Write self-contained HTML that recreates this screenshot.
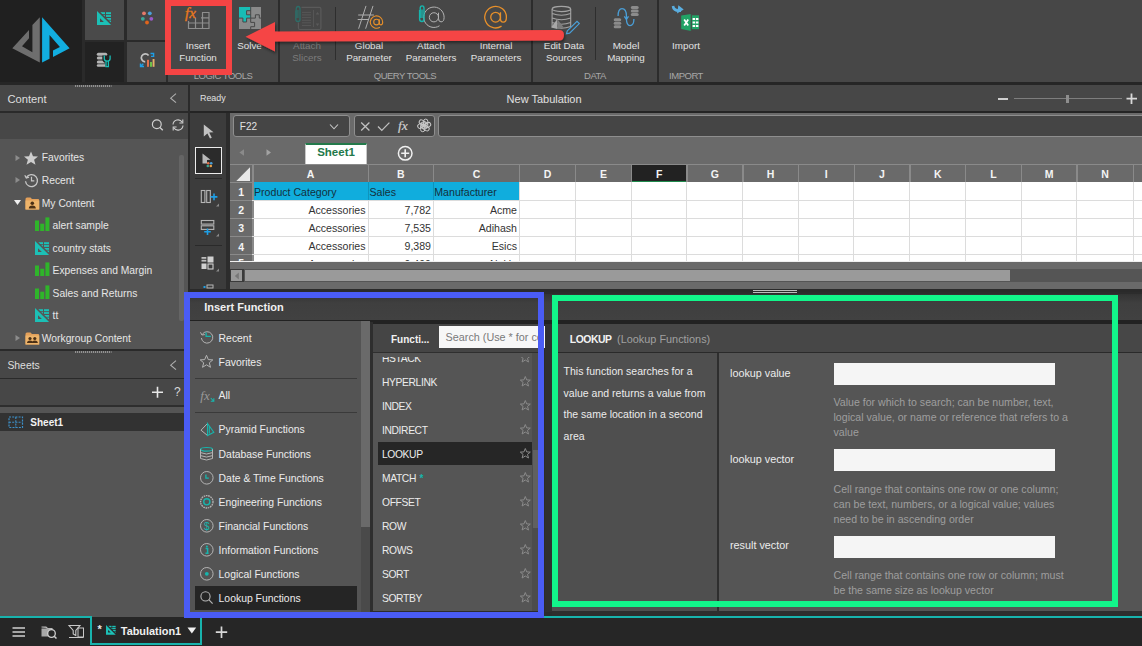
<!DOCTYPE html>
<html><head><meta charset="utf-8">
<style>
*{box-sizing:border-box;margin:0;padding:0}
html,body{width:1142px;height:646px;overflow:hidden}
body{position:relative;background:#555;font-family:"Liberation Sans",sans-serif;color:#e6e6e6}
.a{position:absolute}
.t{position:absolute;white-space:nowrap;line-height:1}
svg{position:absolute;overflow:visible}
</style></head><body>
<div class="a" style="left:0px;top:0px;width:1142px;height:82px;background:#474747;"></div>
<div class="a" style="left:0px;top:0px;width:82px;height:82px;background:#202020;"></div>
<div class="a" style="left:82px;top:0px;width:86px;height:82px;background:#2a2a2a;"></div>
<div class="a" style="left:85px;top:0px;width:39px;height:40px;background:#4a4a4a;"></div>
<div class="a" style="left:127px;top:0px;width:39px;height:40px;background:#474747;"></div>
<div class="a" style="left:85px;top:42px;width:39px;height:40px;background:#222222;"></div>
<div class="a" style="left:127px;top:42px;width:39px;height:40px;background:#474747;"></div>
<div class="a" style="left:0px;top:82px;width:1142px;height:3px;background:#262626;"></div>
<div class="a" style="left:166px;top:0px;width:2px;height:82px;background:#2c2c2c;"></div>
<div class="a" style="left:278px;top:0px;width:2px;height:82px;background:#2c2c2c;"></div>
<div class="a" style="left:531px;top:0px;width:2px;height:82px;background:#2c2c2c;"></div>
<div class="a" style="left:657px;top:0px;width:2px;height:82px;background:#2c2c2c;"></div>
<div class="a" style="left:335px;top:7px;width:1px;height:53px;background:#2e2e2e;"></div>
<div class="a" style="left:595px;top:7px;width:1px;height:53px;background:#2e2e2e;"></div>
<svg style="left:0px;top:0px;" width="82" height="82" viewBox="0 0 82 82"><polygon fill="#6e6e6e" points="39.8,17.3 39.8,62.6 12.3,48.3 29,30.1 29,38.2 22,46.3 32.4,52.2 32.4,25.1"/><polygon fill="#12aee0" points="42.1,17.3 69.6,48.3 53,57 53,50.6 59.9,47.1 49.5,35.1 49.5,58.7 42.1,62.6"/></svg>
<svg style="left:97px;top:11px;" width="15" height="15" viewBox="0 0 15 15"><g transform="scale(1.0)"><path fill="#1cc0b6" fill-rule="evenodd" d="M0,0 L14.1,14 L0,14 Z M3,7.3 L3,11 L6.9,11 Z"/>
<clipPath id="cp97_11"><path d="M2.2,0 H15 V12.8 Z"/></clipPath>
<g clip-path="url(#cp97_11)" fill="#1cc0b6"><rect x="3.2" y="1.2" width="4.8" height="2"/><rect x="9" y="1.2" width="5" height="2"/>
<rect x="3.2" y="4.1" width="4.8" height="1.8"/><rect x="9" y="4.1" width="5" height="1.8"/>
<rect x="3.2" y="7" width="4.8" height="1.8"/><rect x="9" y="7" width="5" height="1.8"/>
<rect x="9" y="9.6" width="5" height="1.6"/></g></g></svg>
<svg style="left:138px;top:8px;" width="16" height="18" viewBox="0 0 16 18"><circle cx="6" cy="5.3" r="1.9" fill="#e57a6a"/><circle cx="11.8" cy="5.3" r="1.9" fill="#4a9fd8"/><circle cx="4.8" cy="10.8" r="1.9" fill="#3aa898"/><circle cx="13.3" cy="10.8" r="1.9" fill="#9b59c9"/><circle cx="9" cy="14.5" r="1.9" fill="#e0651c"/></svg>
<svg style="left:96px;top:52px;" width="16" height="16" viewBox="0 0 16 16"><g fill="#b4b4b4"><rect x="0.8" y="0.8" width="10.4" height="3" rx="1.5"/><rect x="0.8" y="4.6" width="9" height="3" rx="1.5"/><rect x="0.8" y="8.4" width="9" height="3" rx="1.5"/><rect x="0.8" y="12.2" width="10.4" height="2.6" rx="1.3"/></g><path d="M8.3,3.6 V6.8 Q8.3,9.2 11.2,9.2 Q14.1,9.2 14.1,6.8 V3.6 M11.2,9.2 V14.6" stroke="#222" stroke-width="4" fill="none"/><path d="M8.3,3.6 V6.8 Q8.3,9.2 11.2,9.2 Q14.1,9.2 14.1,6.8 V3.6 M10,9 V14.6 H12.4 V9" stroke="#17bdb5" stroke-width="1.3" fill="none"/></svg>
<svg style="left:139px;top:52px;" width="17" height="16" viewBox="0 0 17 16"><path d="M6.2,9.8 A4,4 0 1 1 9.6,3.5" stroke="#c2c2c2" stroke-width="1.7" fill="none"/><path d="M11.5,1.5 H14.6 V4.4 H12" stroke="#1e9fe6" stroke-width="1.4" fill="none"/><path d="M1.5,14.5 L4.3,11.7 M1.5,11.5 V14.5 H5" stroke="#1e9fe6" stroke-width="1.4" fill="none"/><rect x="8" y="7.8" width="2" height="7" fill="#e2704a"/><rect x="11" y="10" width="2" height="4.8" fill="#6cc04a"/><rect x="13.6" y="7" width="1.9" height="7.8" fill="#e8b06a"/></svg>
<svg style="left:178px;top:4px;" width="34" height="28" viewBox="0 0 34 28"><text x="7.0" y="14.2" font-family="Liberation Serif" font-style="italic" font-size="15" fill="#e8781e" stroke="#e8781e" stroke-width="0.35">fx</text><g stroke="#8e8e8e" stroke-width="1.2" fill="none"><path d="M24,8.5 H31 V24.5 H10.5 V19 H31 M23,13.8 H31 M17.5,14 V24.5 M24.5,8.5 V24.5 M10.5,17 V24.5"/></g></svg>
<svg style="left:239px;top:7px;" width="22" height="22" viewBox="0 0 22 22"><rect x="0" y="0" width="22" height="22" fill="#8a8a8a"/><path d="M0,0 H11.7 V3.7 H7.6 V7.8 H11.7 V11.1 H7.6 V15 H3.9 V11.1 H0 Z" fill="#17bdb5"/><path d="M11.7,3.7 H7.6 V7.8 H11.7 M11.7,0 V11.1 H16.4 V7.8 H20.3 V11.1 H22 M0,11.1 H3.9 V15 H7.6 V11.1 H11.7 V15.4 H15.6 V19.7 H11.7 V22" stroke="#474747" stroke-width="1" fill="none"/></svg>
<svg style="left:294px;top:5px;" width="28" height="26" viewBox="0 0 28 26"><rect x="4.4" y="2.4" width="22.5" height="22.1" rx="1.5" stroke="#5a5a5a" stroke-width="1.2" fill="none"/><path d="M8,7.4 H17 M8,9.9 H17 M8,12.6 H17 M8,15.3 H17 M8,17.8 H17 M8,20.5 H17 M19.5,5 V22" stroke="#585858" stroke-width="0.9" fill="none"/><path d="M23.5,7 l-1.8,2.4 h3.6 z M23.5,21 l-1.8,-2.4 h3.6 z" fill="#5a5a5a"/><rect x="0" y="0" width="7.5" height="17.5" fill="#474747"/><path d="M2.2,13 V4 Q2.2,1.5 4.1,1.5 Q6,1.5 6,4 V14.5 Q6,16.5 4,16.5 Q2,16.5 1.8,14.5 V5.5 M3.9,5 V13" stroke="#2c6e69" stroke-width="1.3" fill="none"/></svg>
<svg style="left:350px;top:0px;" width="40" height="34" viewBox="0 0 40 34"><path d="M16,5.9 L8.6,28.7 M23,5.9 L15.6,28.7 M8.2,15 H23.9 M7.7,19.5 H19" stroke="#aeaeae" stroke-width="1" fill="none"/><g stroke="#e8902a" stroke-width="1.1" fill="none"><circle cx="26.5" cy="22.1" r="2.79"/><path d="M29.29,19.31 V22.80 Q29.29,24.89 30.82,24.89 Q32.70,24.89 32.70,22.10 A6.2,6.2 0 1 0 29.91,27.25"/></g></svg>
<svg style="left:410px;top:0px;" width="40" height="34" viewBox="0 0 40 34"><g stroke="#b3b3b3" stroke-width="1.0" fill="none"><circle cx="23.9" cy="17.3" r="4.59"/><path d="M28.49,12.71 V18.45 Q28.49,21.89 31.01,21.89 Q34.10,21.89 34.10,17.30 A10.2,10.2 0 1 0 29.51,25.77"/></g><path d="M10.2,18 V8.2 Q10.2,5.9 12.1,5.9 Q14,5.9 14,8.2 V19 Q14,21.5 12,21.5 Q9.6,21.5 9.6,19 V10 M12,9.5 V18" stroke="#17b5ad" stroke-width="1.4" fill="none"/></svg>
<svg style="left:480px;top:0px;" width="34" height="34" viewBox="0 0 34 34"><g stroke="#e8902a" stroke-width="1.3" fill="none"><circle cx="15.6" cy="17.2" r="4.86"/><path d="M20.46,12.34 V18.41 Q20.46,22.06 23.13,22.06 Q26.40,22.06 26.40,17.20 A10.8,10.8 0 1 0 21.54,26.16"/></g></svg>
<svg style="left:550px;top:4px;" width="32" height="30" viewBox="0 0 32 30"><g stroke="#a4a4a4" stroke-width="1.1" fill="none"><ellipse cx="11.4" cy="5" rx="9.3" ry="2.6"/><path d="M2.1,5 V22.5 Q11.4,26 20.7,22.5 V5 M2.1,9.6 Q11.4,13 20.7,9.6 M2.1,14 Q11.4,17.4 20.7,14 M2.1,18.6 Q11.4,22 20.7,18.6"/></g><path d="M7.3,15.1 L1.1,23.4 L7.3,25.1 Z" fill="#a8a8a8"/><path d="M7.3,15.1 L13.8,23.4 L7.3,25.1 Z" fill="#7c7c7c"/><path d="M17.3,26.9 L27,17.3 L29.3,19.6 L19.6,29.2 L16.5,29.8 Z" stroke="#4a9fd8" stroke-width="1.2" fill="#474747"/></svg>
<svg style="left:612px;top:4px;" width="30" height="28" viewBox="0 0 30 28"><g fill="#8c8c8c"><rect x="1.7" y="14.2" width="7.5" height="3" rx="1.5"/><rect x="1.7" y="17.7" width="7.5" height="3" rx="1.5"/><rect x="1.7" y="21.2" width="7.5" height="3" rx="1.5"/><rect x="18.8" y="1.9" width="7.9" height="3" rx="1.5"/><rect x="18.8" y="5.4" width="7.9" height="3" rx="1.5"/><rect x="18.8" y="8.9" width="7.9" height="3" rx="1.5"/></g><path d="M6.1,12 Q6.1,4.6 10,4.6 Q14.4,4.6 14.4,12 V14 Q14.4,21.6 18,21.6 Q21.9,21.6 21.9,15" stroke="#4a9fd8" stroke-width="1.3" fill="none"/><path d="M12.3,12.3 L14.4,15.3 L16.5,12.3" stroke="#4a9fd8" stroke-width="1.3" fill="none"/></svg>
<svg style="left:670px;top:3px;" width="32" height="30" viewBox="0 0 32 30"><path d="M3,3 Q3.5,7.6 9,7.6 H11" stroke="#5aaee0" stroke-width="2.6" fill="none"/><path d="M8.4,2.3 L13.7,6.4 L7,10.6 Z" fill="#5aaee0"/><rect x="21.8" y="12.3" width="7.2" height="13.9" fill="#21a366"/><path d="M11.2,12.6 L21.1,10.9 V27.9 L11.2,25.9 Z" fill="#21a366"/><path d="M21.1,10.9 V27.9" stroke="#474747" stroke-width="0.8"/><path d="M14.2,16.5 L18.2,22.5 M18.2,16.5 L14.2,22.5" stroke="#fff" stroke-width="1.7"/><g fill="#fff"><rect x="22.6" y="15" width="2.4" height="2"/><rect x="25.8" y="15" width="2.6" height="2"/><rect x="22.6" y="18.5" width="2.4" height="2"/><rect x="25.8" y="18.5" width="2.6" height="2"/><rect x="22.6" y="22" width="2.4" height="2"/><rect x="25.8" y="22" width="2.6" height="2"/></g></svg>
<div class="t" style="left:-102px;width:600px;text-align:center;top:41.00px;font-size:9.8px;color:#e2e2e2;font-weight:400;">Insert</div>
<div class="t" style="left:-102px;width:600px;text-align:center;top:52.50px;font-size:9.8px;color:#e2e2e2;font-weight:400;">Function</div>
<div class="t" style="left:-50.5px;width:600px;text-align:center;top:41.00px;font-size:9.8px;color:#e2e2e2;font-weight:400;">Solve</div>
<div class="t" style="left:7px;width:600px;text-align:center;top:41.00px;font-size:9.8px;color:#7c7c7c;font-weight:400;">Attach</div>
<div class="t" style="left:7px;width:600px;text-align:center;top:52.50px;font-size:9.8px;color:#7c7c7c;font-weight:400;">Slicers</div>
<div class="t" style="left:69px;width:600px;text-align:center;top:41.00px;font-size:9.8px;color:#e2e2e2;font-weight:400;">Global</div>
<div class="t" style="left:69px;width:600px;text-align:center;top:52.50px;font-size:9.8px;color:#e2e2e2;font-weight:400;">Parameter</div>
<div class="t" style="left:131px;width:600px;text-align:center;top:41.00px;font-size:9.8px;color:#e2e2e2;font-weight:400;">Attach</div>
<div class="t" style="left:131px;width:600px;text-align:center;top:52.50px;font-size:9.8px;color:#e2e2e2;font-weight:400;">Parameters</div>
<div class="t" style="left:196px;width:600px;text-align:center;top:41.00px;font-size:9.8px;color:#e2e2e2;font-weight:400;">Internal</div>
<div class="t" style="left:196px;width:600px;text-align:center;top:52.50px;font-size:9.8px;color:#e2e2e2;font-weight:400;">Parameters</div>
<div class="t" style="left:264px;width:600px;text-align:center;top:41.00px;font-size:9.8px;color:#e2e2e2;font-weight:400;">Edit Data</div>
<div class="t" style="left:264px;width:600px;text-align:center;top:52.50px;font-size:9.8px;color:#e2e2e2;font-weight:400;">Sources</div>
<div class="t" style="left:326px;width:600px;text-align:center;top:41.00px;font-size:9.8px;color:#e2e2e2;font-weight:400;">Model</div>
<div class="t" style="left:326px;width:600px;text-align:center;top:52.50px;font-size:9.8px;color:#e2e2e2;font-weight:400;">Mapping</div>
<div class="t" style="left:386px;width:600px;text-align:center;top:41.00px;font-size:9.8px;color:#e2e2e2;font-weight:400;">Import</div>
<div class="t" style="left:-77px;width:600px;text-align:center;top:70.96px;font-size:9.5px;color:#a8a8a8;font-weight:400;letter-spacing:-0.5px">LOGIC TOOLS</div>
<div class="t" style="left:105px;width:600px;text-align:center;top:70.96px;font-size:9.5px;color:#a8a8a8;font-weight:400;letter-spacing:-0.5px">QUERY TOOLS</div>
<div class="t" style="left:295px;width:600px;text-align:center;top:70.96px;font-size:9.5px;color:#a8a8a8;font-weight:400;letter-spacing:-0.5px">DATA</div>
<div class="t" style="left:386px;width:600px;text-align:center;top:70.96px;font-size:9.5px;color:#a8a8a8;font-weight:400;letter-spacing:-0.5px">IMPORT</div>
<div class="a" style="left:0px;top:85px;width:188px;height:26px;background:#474747;"></div>
<div class="t" style="left:7.4px;top:93.52px;font-size:11.2px;color:#dedede;font-weight:400;">Content</div>
<svg style="left:168px;top:90px;" width="12" height="16" viewBox="0 0 12 16"><path d="M8,3.7 L2.7,8.2 L8,12.7" stroke="#b0b0b0" stroke-width="1.1" fill="none"/></svg>
<div class="a" style="left:0px;top:111px;width:188px;height:1.5px;background:#2a2a2a;"></div>
<div class="a" style="left:0px;top:112.5px;width:188px;height:26px;background:#474747;"></div>
<svg style="left:150px;top:118px;" width="14" height="14" viewBox="0 0 14 14"><circle cx="6.8" cy="6.3" r="4.4" stroke="#cfcfcf" stroke-width="1.2" fill="none"/><path d="M9.9,9.5 L12.8,12.2" stroke="#cfcfcf" stroke-width="1.4"/></svg>
<svg style="left:171px;top:118px;" width="14" height="14" viewBox="0 0 14 14"><path d="M2,6.5 A5,5 0 0 1 11.2,4.2 M12,7.5 A5,5 0 0 1 2.8,9.8" stroke="#cfcfcf" stroke-width="1.1" fill="none"/><path d="M11.8,1.5 V5 H8.4 M2.2,12.5 V9 H5.6" stroke="#cfcfcf" stroke-width="1.1" fill="none"/></svg>
<div class="a" style="left:0px;top:138.5px;width:188px;height:210.5px;background:#555555;"></div>
<div class="a" style="left:179px;top:155px;width:5px;height:166px;background:#656565;border-radius:2px"></div>
<svg style="left:14.5px;top:154.8px;" width="6" height="6" viewBox="0 0 6 6"><path d="M0.5,0 L5,3 L0.5,6 Z" fill="#8c8c8c"/></svg>
<svg style="left:24px;top:150.5px;" width="15" height="15" viewBox="0 0 15 15"><path d="M7,0.5 L9,5.3 L14,5.5 L10.1,8.7 L11.5,13.8 L7,11 L2.5,13.8 L3.9,8.7 L0,5.5 L5,5.3 Z" fill="#cdcdcd"/></svg>
<div class="t" style="left:41.8px;top:153.38px;font-size:10.3px;color:#e6e6e6;font-weight:400;">Favorites</div>
<svg style="left:14.5px;top:177.4px;" width="6" height="6" viewBox="0 0 6 6"><path d="M0.5,0 L5,3 L0.5,6 Z" fill="#8c8c8c"/></svg>
<svg style="left:24px;top:173.4px;" width="15" height="15" viewBox="0 0 15 15"><path d="M2.3,4.5 A6,6 0 1 1 1.5,8.2" stroke="#c8c8c8" stroke-width="1.3" fill="none"/><path d="M0.8,2.3 L2.3,5 L5,4.2" stroke="#c8c8c8" stroke-width="1.2" fill="none"/><path d="M7.5,3.8 V7.8 H10.3" stroke="#c8c8c8" stroke-width="1.2" fill="none"/></svg>
<div class="t" style="left:41.8px;top:176.38px;font-size:10.3px;color:#e6e6e6;font-weight:400;">Recent</div>
<svg style="left:14px;top:199.5px;" width="8" height="6" viewBox="0 0 8 6"><path d="M0,0 H7 L3.5,5 Z" fill="#f0f0f0"/></svg>
<svg style="left:24.5px;top:196.5px;" width="15" height="13" viewBox="0 0 15 13"><path d="M0.5,2 Q0.5,0.5 2,0.5 H5.5 L7,2 H13 Q14.2,2 14.2,3.2 V12.5 H0.5 Z" fill="#e3a05a"/><rect x="0.5" y="3.5" width="13.7" height="9" fill="#eeb46a"/><circle cx="7.3" cy="6.3" r="1.8" fill="#4b3016"/><path d="M3.8,11.5 Q3.8,8.6 7.3,8.6 Q10.8,8.6 10.8,11.5 Z" fill="#4b3016"/></svg>
<div class="t" style="left:41.8px;top:198.78px;font-size:10.3px;color:#e6e6e6;font-weight:400;">My Content</div>
<svg style="left:34.8px;top:217.3px;" width="15" height="15" viewBox="0 0 15 15"><rect x="0" y="3.5" width="4" height="10.5" fill="#2fb52a"/><rect x="5.2" y="6.7" width="4" height="7.3" fill="#2fb52a"/><rect x="10.4" y="0.4" width="4" height="13.6" fill="#2fb52a"/></svg>
<div class="t" style="left:52.6px;top:221.38px;font-size:10.3px;color:#e6e6e6;font-weight:400;">alert sample</div>
<svg style="left:34.7px;top:240.8px;" width="15" height="15" viewBox="0 0 15 15"><g transform="scale(1.0)"><path fill="#1cc0b6" fill-rule="evenodd" d="M0,0 L14.1,14 L0,14 Z M3,7.3 L3,11 L6.9,11 Z"/>
<clipPath id="cp34_7_240_8"><path d="M2.2,0 H15 V12.8 Z"/></clipPath>
<g clip-path="url(#cp34_7_240_8)" fill="#1cc0b6"><rect x="3.2" y="1.2" width="4.8" height="2"/><rect x="9" y="1.2" width="5" height="2"/>
<rect x="3.2" y="4.1" width="4.8" height="1.8"/><rect x="9" y="4.1" width="5" height="1.8"/>
<rect x="3.2" y="7" width="4.8" height="1.8"/><rect x="9" y="7" width="5" height="1.8"/>
<rect x="9" y="9.6" width="5" height="1.6"/></g></g></svg>
<div class="t" style="left:52.6px;top:243.88px;font-size:10.3px;color:#e6e6e6;font-weight:400;">country stats</div>
<svg style="left:34.8px;top:262.2px;" width="15" height="15" viewBox="0 0 15 15"><rect x="0" y="3.5" width="4" height="10.5" fill="#2fb52a"/><rect x="5.2" y="6.7" width="4" height="7.3" fill="#2fb52a"/><rect x="10.4" y="0.4" width="4" height="13.6" fill="#2fb52a"/></svg>
<div class="t" style="left:52.6px;top:266.28px;font-size:10.3px;color:#e6e6e6;font-weight:400;">Expenses and Margin</div>
<svg style="left:34.8px;top:284.7px;" width="15" height="15" viewBox="0 0 15 15"><rect x="0" y="3.5" width="4" height="10.5" fill="#2fb52a"/><rect x="5.2" y="6.7" width="4" height="7.3" fill="#2fb52a"/><rect x="10.4" y="0.4" width="4" height="13.6" fill="#2fb52a"/></svg>
<div class="t" style="left:52.6px;top:288.78px;font-size:10.3px;color:#e6e6e6;font-weight:400;">Sales and Returns</div>
<svg style="left:34.7px;top:308.1px;" width="15" height="15" viewBox="0 0 15 15"><g transform="scale(1.0)"><path fill="#1cc0b6" fill-rule="evenodd" d="M0,0 L14.1,14 L0,14 Z M3,7.3 L3,11 L6.9,11 Z"/>
<clipPath id="cp34_7_308_1"><path d="M2.2,0 H15 V12.8 Z"/></clipPath>
<g clip-path="url(#cp34_7_308_1)" fill="#1cc0b6"><rect x="3.2" y="1.2" width="4.8" height="2"/><rect x="9" y="1.2" width="5" height="2"/>
<rect x="3.2" y="4.1" width="4.8" height="1.8"/><rect x="9" y="4.1" width="5" height="1.8"/>
<rect x="3.2" y="7" width="4.8" height="1.8"/><rect x="9" y="7" width="5" height="1.8"/>
<rect x="9" y="9.6" width="5" height="1.6"/></g></g></svg>
<div class="t" style="left:52.6px;top:311.18px;font-size:10.3px;color:#e6e6e6;font-weight:400;">tt</div>
<svg style="left:14.5px;top:334.8px;" width="6" height="6" viewBox="0 0 6 6"><path d="M0.5,0 L5,3 L0.5,6 Z" fill="#8c8c8c"/></svg>
<svg style="left:24.5px;top:331.5px;" width="15" height="13" viewBox="0 0 15 13"><path d="M0.5,2 Q0.5,0.5 2,0.5 H5.5 L7,2 H13 Q14.2,2 14.2,3.2 V12.5 H0.5 Z" fill="#e3a05a"/><rect x="0.5" y="3.5" width="13.7" height="9" fill="#eeb46a"/><circle cx="5" cy="6.5" r="1.6" fill="#4b3016"/><path d="M2,11 Q2,8.5 5,8.5 Q8,8.5 8,11 Z" fill="#4b3016"/><circle cx="9.8" cy="6.5" r="1.6" fill="#4b3016"/><path d="M6.8,11 Q6.8,8.5 9.8,8.5 Q12.8,8.5 12.8,11 Z" fill="#4b3016"/></svg>
<div class="t" style="left:41.8px;top:333.68px;font-size:10.3px;color:#e6e6e6;font-weight:400;">Workgroup Content</div>
<div class="a" style="left:0px;top:348.8px;width:188px;height:2.2px;background:#2a2a2a;"></div>
<svg style="left:75px;top:84.5px;" width="37" height="2" viewBox="0 0 37 2"><path d="M0,1 H36.5" stroke="#dcdcdc" stroke-width="1" stroke-dasharray="1.2 0.8"/></svg>
<div class="a" style="left:0px;top:351px;width:188px;height:26.7px;background:#474747;"></div>
<svg style="left:75px;top:351px;" width="37" height="2" viewBox="0 0 37 2"><path d="M0,1 H36.5" stroke="#dcdcdc" stroke-width="1" stroke-dasharray="1.2 0.8"/></svg>
<div class="t" style="left:7.4px;top:361.20px;font-size:10.4px;color:#dedede;font-weight:400;">Sheets</div>
<svg style="left:168px;top:357px;" width="12" height="16" viewBox="0 0 12 16"><path d="M8,3.7 L2.7,8.2 L8,12.7" stroke="#b0b0b0" stroke-width="1.1" fill="none"/></svg>
<div class="a" style="left:0px;top:377.7px;width:188px;height:1.5px;background:#2a2a2a;"></div>
<div class="a" style="left:0px;top:379.2px;width:188px;height:26px;background:#474747;"></div>
<svg style="left:151px;top:386px;" width="13" height="13" viewBox="0 0 13 13"><path d="M6.5,0.8 V11.8 M1,6.3 H12" stroke="#e8e8e8" stroke-width="1.6"/></svg>
<div class="t" style="left:-122.6px;width:600px;text-align:center;top:386.44px;font-size:12px;color:#d8d8d8;font-weight:400;">?</div>
<div class="a" style="left:0px;top:405.2px;width:188px;height:1.5px;background:#2e2e2e;"></div>
<div class="a" style="left:0px;top:412.8px;width:188px;height:18.4px;background:#323232;"></div>
<svg style="left:8px;top:415.5px;" width="16" height="13" viewBox="0 0 16 13"><rect x="1" y="1" width="13.5" height="10.5" stroke="#3d8fc8" stroke-width="1.2" stroke-dasharray="2 1.2" fill="none"/><path d="M1,6.2 H14.5 M7.8,1 V11.5" stroke="#3d8fc8" stroke-width="1.1" stroke-dasharray="2 1.2"/></svg>
<div class="t" style="left:30.3px;top:417.94px;font-size:10px;color:#f2f2f2;font-weight:700;">Sheet1</div>
<div class="a" style="left:188px;top:85px;width:2px;height:532px;background:#2a2a2a;"></div>
<div class="a" style="left:190px;top:85px;width:952px;height:26px;background:#474747;"></div>
<div class="a" style="left:190px;top:111px;width:952px;height:1.8px;background:#242424;"></div>
<div class="t" style="left:200px;top:94.17px;font-size:8.9px;color:#e0e0e0;font-weight:400;">Ready</div>
<div class="t" style="left:506.6px;top:93.59px;font-size:11px;color:#e0e0e0;font-weight:400;">New Tabulation</div>
<div class="a" style="left:998px;top:97.8px;width:9.7px;height:2px;background:#cfcfcf;"></div>
<div class="a" style="left:1014px;top:98.2px;width:108px;height:1px;background:#7e7e7e;"></div>
<div class="a" style="left:1065.8px;top:94.5px;width:3px;height:8px;background:#8e8e8e;"></div>
<svg style="left:1126px;top:93px;" width="12" height="12" viewBox="0 0 12 12"><path d="M5.5,0.5 V11 M0.5,5.7 H11" stroke="#d8d8d8" stroke-width="1.8"/></svg>
<div class="a" style="left:190px;top:112.8px;width:36px;height:176px;background:#3c3c3c;"></div>
<div class="a" style="left:226px;top:112.8px;width:4px;height:176px;background:#2c2c2c;"></div>
<div class="a" style="left:190px;top:288.7px;width:952px;height:3.5px;background:#2a2a2a;"></div>
<svg style="left:203px;top:124px;" width="12" height="16" viewBox="0 0 12 16"><path d="M0.8,0.5 L10.5,8.3 L6.2,8.6 L8.8,13.8 L7,14.6 L4.4,9.5 L0.8,12.5 Z" fill="#c2c2c2"/></svg>
<div class="a" style="left:195px;top:147px;width:27px;height:27px;border:1.6px solid #ececec;background:#2b2b2b"></div>
<svg style="left:201.5px;top:153px;" width="14" height="14" viewBox="0 0 14 14"><path d="M0.5,0.5 L8.5,6.7 L5,7 L5,10.5 L0.5,10.5 Z" fill="#b8b8b8"/><circle cx="6.2" cy="10.3" r="1.3" fill="#e2704a"/><circle cx="9.2" cy="10.3" r="1.3" fill="#4a9fd8"/><circle cx="5.8" cy="13" r="1.3" fill="#3aa898"/><circle cx="8.8" cy="13" r="1.3" fill="#e8a14a"/></svg>
<div class="a" style="left:195px;top:177.6px;width:27px;height:1.5px;background:#2a2a2a;"></div>
<svg style="left:200px;top:189px;" width="20" height="18" viewBox="0 0 20 18"><rect x="1.3" y="1.5" width="3.6" height="12" stroke="#b5b5b5" stroke-width="1.1" fill="none"/><rect x="6.7" y="1.5" width="3.6" height="12" stroke="#b5b5b5" stroke-width="1.1" fill="none"/><path d="M14,4.5 V11.3 M10.6,7.9 H17.4" stroke="#1e9fe6" stroke-width="1.6"/><path d="M19,14.5 V17.5 H16 Z" fill="#8a8a8a"/></svg>
<svg style="left:200px;top:219px;" width="20" height="18" viewBox="0 0 20 18"><rect x="1.3" y="1.5" width="12.5" height="3.6" stroke="#b5b5b5" stroke-width="1.1" fill="none"/><rect x="1.3" y="6.8" width="12.5" height="3.6" stroke="#b5b5b5" stroke-width="1.1" fill="none"/><path d="M7.5,9.5 V16 M4.2,12.8 H10.8" stroke="#1e9fe6" stroke-width="1.6"/><path d="M19,14.5 V17.5 H16 Z" fill="#8a8a8a"/></svg>
<div class="a" style="left:195px;top:244.8px;width:27px;height:1.5px;background:#2a2a2a;"></div>
<svg style="left:200px;top:255px;" width="20" height="18" viewBox="0 0 20 18"><rect x="1.5" y="2" width="4.8" height="1.8" fill="#bdbdbd"/><rect x="1.5" y="4.8" width="4.8" height="1.8" fill="#bdbdbd"/><rect x="7.5" y="1.5" width="6" height="6" fill="#d0d0d0"/><rect x="1.5" y="8.5" width="5" height="5.5" fill="#d0d0d0"/><rect x="8" y="9" width="5" height="5" stroke="#d0d0d0" stroke-width="1.1" fill="none"/><path d="M19,13.5 V16.5 H16 Z" fill="#8a8a8a"/></svg>
<svg style="left:200px;top:284px;" width="20" height="6" viewBox="0 0 20 6"><rect x="7" y="1" width="6" height="3" stroke="#b5b5b5" stroke-width="1" fill="none"/><rect x="3.5" y="2" width="2" height="2" fill="#1e9fe6"/></svg>
<div class="a" style="left:0px;top:617px;width:1142px;height:29px;background:#262626;"></div>
<div class="a" style="left:0;top:615.8px;width:91px;height:2px;background:#18b3ad"></div>
<div class="a" style="left:202px;top:615.8px;width:940px;height:2px;background:#18b3ad"></div>
<div class="a" style="left:90.2px;top:615.8px;width:112px;height:29px;border:2px solid #18b3ad;border-top:none"></div>
<svg style="left:12px;top:627px;" width="14" height="10" viewBox="0 0 14 10"><path d="M0.5,1 H13 M0.5,5 H13 M0.5,9 H13" stroke="#d0d0d0" stroke-width="1.6"/></svg>
<svg style="left:41px;top:624px;" width="17" height="16" viewBox="0 0 17 16"><path d="M0.5,3 H5 L6.5,4.5 H11 V6" stroke="#b8b8b8" stroke-width="1.1" fill="#8a8a8a"/><rect x="0.5" y="4.5" width="9" height="8" fill="#a8a8a8"/><circle cx="10.5" cy="9.5" r="3.8" stroke="#d0d0d0" stroke-width="1.3" fill="#262626"/><path d="M13.2,12.2 L15.5,14.5" stroke="#d0d0d0" stroke-width="1.5"/></svg>
<svg style="left:68px;top:624px;" width="17" height="16" viewBox="0 0 17 16"><path d="M1,1.5 H12 L7.8,6.5 V11.5 L5.2,10 V6.5 Z" stroke="#c8c8c8" stroke-width="1.1" fill="none"/><rect x="10" y="4" width="5.5" height="9" stroke="#c8c8c8" stroke-width="1" fill="none"/><path d="M1,13.5 H15.5" stroke="#c8c8c8" stroke-width="1"/></svg>
<div class="t" style="left:97.5px;top:623.69px;font-size:11px;color:#e8e8e8;font-weight:700;">*</div>
<svg style="left:105.8px;top:625.3px;" width="15" height="15" viewBox="0 0 15 15"><g transform="scale(0.69)"><path fill="#1cc0b6" fill-rule="evenodd" d="M0,0 L14.1,14 L0,14 Z M3,7.3 L3,11 L6.9,11 Z"/>
<clipPath id="cp105_8_625_3"><path d="M2.2,0 H15 V12.8 Z"/></clipPath>
<g clip-path="url(#cp105_8_625_3)" fill="#1cc0b6"><rect x="3.2" y="1.2" width="4.8" height="2"/><rect x="9" y="1.2" width="5" height="2"/>
<rect x="3.2" y="4.1" width="4.8" height="1.8"/><rect x="9" y="4.1" width="5" height="1.8"/>
<rect x="3.2" y="7" width="4.8" height="1.8"/><rect x="9" y="7" width="5" height="1.8"/>
<rect x="9" y="9.6" width="5" height="1.6"/></g></g></svg>
<div class="t" style="left:120.8px;top:625.57px;font-size:10.9px;color:#f0f0f0;font-weight:700;">Tabulation1</div>
<svg style="left:186.5px;top:627px;" width="10" height="7" viewBox="0 0 10 7"><path d="M0.5,0.5 H9.2 L4.85,6.5 Z" fill="#f0f0f0"/></svg>
<svg style="left:214.5px;top:625.5px;" width="13" height="13" viewBox="0 0 13 13"><path d="M6.5,0.5 V12 M0.8,6.2 H12.2" stroke="#d8d8d8" stroke-width="1.7"/></svg>
<div class="a" style="left:230px;top:112.8px;width:912px;height:26.2px;background:#6a6a6a;"></div>
<div class="a" style="left:233px;top:115px;width:117px;height:22px;border:1.5px solid #8e8e8e;border-radius:3px;background:#454545"></div>
<div class="t" style="left:239.8px;top:121.73px;font-size:10px;color:#e2e2e2;font-weight:400;">F22</div>
<svg style="left:329px;top:123px;" width="11" height="8" viewBox="0 0 11 8"><path d="M1,1.5 L5,5.8 L9,1.5" stroke="#c8c8c8" stroke-width="1.1" fill="none"/></svg>
<div class="a" style="left:354px;top:115px;width:81px;height:22px;border:1.5px solid #8e8e8e;border-radius:3px;background:#454545"></div>
<svg style="left:360px;top:121px;" width="11" height="11" viewBox="0 0 11 11"><path d="M1.2,1.5 L9.4,9.5 M9.4,1.5 L1.2,9.5" stroke="#c0c0c0" stroke-width="1.3"/></svg>
<svg style="left:377px;top:121px;" width="14" height="11" viewBox="0 0 14 11"><path d="M1,5.5 L4.8,9.4 L12.4,1.6" stroke="#c0c0c0" stroke-width="1.3" fill="none"/></svg>
<svg style="left:397px;top:118px;" width="16" height="16" viewBox="0 0 16 16"><text x="1" y="12.3" font-family="Liberation Serif" font-style="italic" font-size="13.5" fill="#d0d0d0" stroke="#d0d0d0" stroke-width="0.2">fx</text></svg>
<svg style="left:417px;top:118px;" width="15" height="15" viewBox="0 0 15 15"><g stroke="#c8c8c8" stroke-width="1" fill="none" transform="translate(7.2,7.4)"><rect x="-0.6" y="-6.3" width="4.2" height="8.6" rx="2.1" transform="rotate(0)"/><rect x="-0.6" y="-6.3" width="4.2" height="8.6" rx="2.1" transform="rotate(60)"/><rect x="-0.6" y="-6.3" width="4.2" height="8.6" rx="2.1" transform="rotate(120)"/><rect x="-0.6" y="-6.3" width="4.2" height="8.6" rx="2.1" transform="rotate(180)"/><rect x="-0.6" y="-6.3" width="4.2" height="8.6" rx="2.1" transform="rotate(240)"/><rect x="-0.6" y="-6.3" width="4.2" height="8.6" rx="2.1" transform="rotate(300)"/></g></svg>
<div class="a" style="left:438px;top:115px;width:720px;height:22px;border:1.5px solid #8e8e8e;border-radius:3px;background:#454545"></div>
<div class="a" style="left:230px;top:139px;width:912px;height:25px;background:#6a6a6a;"></div>
<svg style="left:239px;top:149px;" width="6" height="7" viewBox="0 0 6 7"><path d="M5,0.3 V6.7 L0.4,3.5 Z" fill="#8a8a8a"/></svg>
<svg style="left:265.5px;top:149px;" width="6" height="7" viewBox="0 0 6 7"><path d="M0.5,0.3 V6.7 L5,3.5 Z" fill="#a2a2a2"/></svg>
<div class="a" style="left:305px;top:142.5px;width:62px;height:22px;background:#fff;border-top:2px solid #23794a;border-left:1px solid #c8c8c8;border-right:1px solid #c8c8c8"></div>
<div class="t" style="left:36px;width:600px;text-align:center;top:147.47px;font-size:11.5px;color:#23794a;font-weight:700;">Sheet1</div>
<svg style="left:396.5px;top:144.5px;" width="17" height="17" viewBox="0 0 17 17"><circle cx="8.2" cy="8.3" r="6.8" stroke="#f0f0f0" stroke-width="1.5" fill="none"/><path d="M8.2,4.3 V12.3 M4.2,8.3 H12.2" stroke="#f0f0f0" stroke-width="1.6"/></svg>
<div class="a" style="left:230px;top:163.9px;width:912px;height:1.4px;background:#8a8a8a;"></div>
<div class="a" style="left:230px;top:165.3px;width:912px;height:17px;background:#6a6a6a;"></div>
<div class="a" style="left:252.4px;top:182.3px;width:890px;height:78.7px;background:#ffffff;"></div>
<svg style="left:236px;top:166.5px;" width="15" height="15" viewBox="0 0 15 15"><path d="M14,0.3 V14 H0.3 Z" fill="#e8e8e8"/></svg>
<div class="a" style="left:252.4px;top:165.3px;width:1.3px;height:17px;background:#8a8a8a;"></div>
<div class="t" style="left:10.600000000000023px;width:600px;text-align:center;top:169.11px;font-size:10.5px;color:#f4f4f4;font-weight:700;">A</div>
<div class="a" style="left:367.8px;top:165.3px;width:1.3px;height:17px;background:#8a8a8a;"></div>
<div class="t" style="left:100.89999999999998px;width:600px;text-align:center;top:169.11px;font-size:10.5px;color:#f4f4f4;font-weight:700;">B</div>
<div class="a" style="left:433px;top:165.3px;width:1.3px;height:17px;background:#8a8a8a;"></div>
<div class="t" style="left:176.5px;width:600px;text-align:center;top:169.11px;font-size:10.5px;color:#f4f4f4;font-weight:700;">C</div>
<div class="a" style="left:519px;top:165.3px;width:1.3px;height:17px;background:#8a8a8a;"></div>
<div class="t" style="left:247.5px;width:600px;text-align:center;top:169.11px;font-size:10.5px;color:#f4f4f4;font-weight:700;">D</div>
<div class="a" style="left:575px;top:165.3px;width:1.3px;height:17px;background:#8a8a8a;"></div>
<div class="t" style="left:303.4px;width:600px;text-align:center;top:169.11px;font-size:10.5px;color:#f4f4f4;font-weight:700;">E</div>
<div class="a" style="left:630.8px;top:165.3px;width:1.3px;height:17px;background:#8a8a8a;"></div>
<div class="a" style="left:631.8px;top:165.3px;width:54.60000000000002px;height:17px;background:#222222;"></div>
<div class="a" style="left:631.8px;top:180.8px;width:54.60000000000002px;height:1.5px;background:#1f8a4c;"></div>
<div class="t" style="left:359.0999999999999px;width:600px;text-align:center;top:169.11px;font-size:10.5px;color:#f4f4f4;font-weight:700;">F</div>
<div class="a" style="left:686.4px;top:165.3px;width:1.3px;height:17px;background:#8a8a8a;"></div>
<div class="t" style="left:414.8499999999999px;width:600px;text-align:center;top:169.11px;font-size:10.5px;color:#f4f4f4;font-weight:700;">G</div>
<div class="a" style="left:742.3px;top:165.3px;width:1.3px;height:17px;background:#8a8a8a;"></div>
<div class="t" style="left:470.5999999999999px;width:600px;text-align:center;top:169.11px;font-size:10.5px;color:#f4f4f4;font-weight:700;">H</div>
<div class="a" style="left:797.9px;top:165.3px;width:1.3px;height:17px;background:#8a8a8a;"></div>
<div class="t" style="left:526.2px;width:600px;text-align:center;top:169.11px;font-size:10.5px;color:#f4f4f4;font-weight:700;">I</div>
<div class="a" style="left:853.5px;top:165.3px;width:1.3px;height:17px;background:#8a8a8a;"></div>
<div class="t" style="left:581.95px;width:600px;text-align:center;top:169.11px;font-size:10.5px;color:#f4f4f4;font-weight:700;">J</div>
<div class="a" style="left:909.4px;top:165.3px;width:1.3px;height:17px;background:#8a8a8a;"></div>
<div class="t" style="left:637.7px;width:600px;text-align:center;top:169.11px;font-size:10.5px;color:#f4f4f4;font-weight:700;">K</div>
<div class="a" style="left:965px;top:165.3px;width:1.3px;height:17px;background:#8a8a8a;"></div>
<div class="t" style="left:693.35px;width:600px;text-align:center;top:169.11px;font-size:10.5px;color:#f4f4f4;font-weight:700;">L</div>
<div class="a" style="left:1020.7px;top:165.3px;width:1.3px;height:17px;background:#8a8a8a;"></div>
<div class="t" style="left:749.0500000000002px;width:600px;text-align:center;top:169.11px;font-size:10.5px;color:#f4f4f4;font-weight:700;">M</div>
<div class="a" style="left:1076.4px;top:165.3px;width:1.3px;height:17px;background:#8a8a8a;"></div>
<div class="t" style="left:805.0500000000002px;width:600px;text-align:center;top:169.11px;font-size:10.5px;color:#f4f4f4;font-weight:700;">N</div>
<div class="a" style="left:1132.7px;top:165.3px;width:1.3px;height:17px;background:#8a8a8a;"></div>
<div class="t" style="left:860.8499999999999px;width:600px;text-align:center;top:169.11px;font-size:10.5px;color:#f4f4f4;font-weight:700;">O</div>
<div class="a" style="left:1188px;top:165.3px;width:1.3px;height:17px;background:#8a8a8a;"></div>
<div class="a" style="left:230px;top:182.3px;width:22.4px;height:78.7px;background:#6a6a6a;"></div>
<div class="a" style="left:230px;top:181.9px;width:22.4px;height:1.2px;background:#8a8a8a;"></div>
<div class="t" style="left:-58.80000000000001px;width:600px;text-align:center;top:187.31px;font-size:10.5px;color:#f4f4f4;font-weight:700;">1</div>
<div class="a" style="left:230px;top:199.79999999999998px;width:22.4px;height:1.2px;background:#8a8a8a;"></div>
<div class="t" style="left:-58.80000000000001px;width:600px;text-align:center;top:205.21px;font-size:10.5px;color:#f4f4f4;font-weight:700;">2</div>
<div class="a" style="left:230px;top:218.0px;width:22.4px;height:1.2px;background:#8a8a8a;"></div>
<div class="t" style="left:-58.80000000000001px;width:600px;text-align:center;top:223.41px;font-size:10.5px;color:#f4f4f4;font-weight:700;">3</div>
<div class="a" style="left:230px;top:236.1px;width:22.4px;height:1.2px;background:#8a8a8a;"></div>
<div class="t" style="left:-58.80000000000001px;width:600px;text-align:center;top:241.51px;font-size:10.5px;color:#f4f4f4;font-weight:700;">4</div>
<div class="a" style="left:230px;top:254.1px;width:22.4px;height:1.2px;background:#8a8a8a;"></div>
<div class="a" style="left:252.4px;top:182.3px;width:1.3px;height:78.7px;background:#8a8a8a;"></div>
<div class="a" style="left:253.7px;top:182.3px;width:265.3px;height:17.9px;background:#10addd;"></div>
<div class="a" style="left:252.4px;top:200.0px;width:890px;height:1.1px;background:#dcdcdc;"></div>
<div class="a" style="left:252.4px;top:218.20000000000002px;width:890px;height:1.1px;background:#dcdcdc;"></div>
<div class="a" style="left:252.4px;top:236.3px;width:890px;height:1.1px;background:#dcdcdc;"></div>
<div class="a" style="left:252.4px;top:254.3px;width:890px;height:1.1px;background:#dcdcdc;"></div>
<div class="a" style="left:367.6px;top:182.3px;width:1.1px;height:78.7px;background:#dcdcdc;"></div>
<div class="a" style="left:432.8px;top:182.3px;width:1.1px;height:78.7px;background:#dcdcdc;"></div>
<div class="a" style="left:518.8px;top:182.3px;width:1.1px;height:78.7px;background:#dcdcdc;"></div>
<div class="a" style="left:574.8px;top:182.3px;width:1.1px;height:78.7px;background:#dcdcdc;"></div>
<div class="a" style="left:630.5999999999999px;top:182.3px;width:1.1px;height:78.7px;background:#dcdcdc;"></div>
<div class="a" style="left:686.1999999999999px;top:182.3px;width:1.1px;height:78.7px;background:#dcdcdc;"></div>
<div class="a" style="left:742.0999999999999px;top:182.3px;width:1.1px;height:78.7px;background:#dcdcdc;"></div>
<div class="a" style="left:797.6999999999999px;top:182.3px;width:1.1px;height:78.7px;background:#dcdcdc;"></div>
<div class="a" style="left:853.3px;top:182.3px;width:1.1px;height:78.7px;background:#dcdcdc;"></div>
<div class="a" style="left:909.1999999999999px;top:182.3px;width:1.1px;height:78.7px;background:#dcdcdc;"></div>
<div class="a" style="left:964.8px;top:182.3px;width:1.1px;height:78.7px;background:#dcdcdc;"></div>
<div class="a" style="left:1020.5px;top:182.3px;width:1.1px;height:78.7px;background:#dcdcdc;"></div>
<div class="a" style="left:1076.2px;top:182.3px;width:1.1px;height:78.7px;background:#dcdcdc;"></div>
<div class="a" style="left:1132.5px;top:182.3px;width:1.1px;height:78.7px;background:#dcdcdc;"></div>
<div class="a" style="left:367.6px;top:182.3px;width:1.1px;height:17.9px;background:#0e93bd;"></div>
<div class="a" style="left:432.8px;top:182.3px;width:1.1px;height:17.9px;background:#0e93bd;"></div>
<div class="a" style="left:518.8px;top:182.3px;width:1.1px;height:17.9px;background:#dcdcdc;"></div>
<div class="t" style="left:-58.80000000000001px;width:600px;text-align:center;top:257.61px;font-size:10.5px;color:#f4f4f4;font-weight:700;">5</div>
<div class="t" style="left:254px;top:186.83px;font-size:10.6px;color:#14303c;font-weight:400;">Product Category</div>
<div class="t" style="left:369.5px;top:186.83px;font-size:10.6px;color:#14303c;font-weight:400;">Sales</div>
<div class="t" style="left:434.3px;top:186.83px;font-size:10.6px;color:#14303c;font-weight:400;">Manufacturer</div>
<div class="t" style="left:-234.5px;width:600px;text-align:right;top:204.63px;font-size:10.6px;color:#333333;font-weight:400;">Accessories</div>
<div class="t" style="left:-169px;width:600px;text-align:right;top:204.63px;font-size:10.6px;color:#333333;font-weight:400;">7,782</div>
<div class="t" style="left:-83px;width:600px;text-align:right;top:204.63px;font-size:10.6px;color:#333333;font-weight:400;">Acme</div>
<div class="t" style="left:-234.5px;width:600px;text-align:right;top:222.73px;font-size:10.6px;color:#333333;font-weight:400;">Accessories</div>
<div class="t" style="left:-169px;width:600px;text-align:right;top:222.73px;font-size:10.6px;color:#333333;font-weight:400;">7,535</div>
<div class="t" style="left:-83px;width:600px;text-align:right;top:222.73px;font-size:10.6px;color:#333333;font-weight:400;">Adihash</div>
<div class="t" style="left:-234.5px;width:600px;text-align:right;top:240.83px;font-size:10.6px;color:#333333;font-weight:400;">Accessories</div>
<div class="t" style="left:-169px;width:600px;text-align:right;top:240.83px;font-size:10.6px;color:#333333;font-weight:400;">9,389</div>
<div class="t" style="left:-83px;width:600px;text-align:right;top:240.83px;font-size:10.6px;color:#333333;font-weight:400;">Esics</div>
<div class="t" style="left:-234.5px;width:600px;text-align:right;top:258.93px;font-size:10.6px;color:#333333;font-weight:400;">Accessories</div>
<div class="t" style="left:-169px;width:600px;text-align:right;top:258.93px;font-size:10.6px;color:#333333;font-weight:400;">9,499</div>
<div class="t" style="left:-83px;width:600px;text-align:right;top:258.93px;font-size:10.6px;color:#333333;font-weight:400;">Nokia</div>
<div class="a" style="left:230px;top:261.2px;width:912px;height:27.5px;background:#6a6a6a;"></div>
<div class="a" style="left:230px;top:260.8px;width:912px;height:1.2px;background:#f0f0f0;"></div>
<div class="a" style="left:230px;top:269px;width:912px;height:12.7px;background:#3a3a3a;"></div>
<div class="a" style="left:244px;top:269px;width:898px;height:12.7px;background:#555555;"></div>
<div class="a" style="left:231px;top:269.6px;width:11px;height:11.5px;background:#9a9a9a;"></div>
<svg style="left:233.5px;top:271.5px;" width="6" height="8" viewBox="0 0 6 8"><path d="M4.8,0.5 V7.5 L0.8,4 Z" fill="#777777"/></svg>
<div class="a" style="left:244.5px;top:269.6px;width:765.5px;height:11.5px;background:#9a9a9a;"></div>
<div class="a" style="left:190px;top:292.2px;width:952px;height:324px;background:#2c2c2c;"></div>
<div class="a" style="left:190px;top:294px;width:952px;height:26.3px;background:linear-gradient(#333333,#3f3f3f 35%,#414141)"></div>
<div class="a" style="left:190px;top:320.3px;width:952px;height:3.4px;background:#222222;"></div>
<div class="t" style="left:204.2px;top:301.69px;font-size:11px;color:#f0f0f0;font-weight:700;">Insert Function</div>
<div class="a" style="left:190px;top:320.8px;width:171px;height:291px;background:#545454;"></div>
<div class="a" style="left:361px;top:320.8px;width:9px;height:206.4px;background:#6a6a6a;"></div>
<div class="a" style="left:361px;top:527.2px;width:9px;height:84.5px;background:#4a4a4a;"></div>
<div class="a" style="left:370px;top:321.6px;width:3px;height:290px;background:#2e2e2e;"></div>
<div class="a" style="left:195px;top:378px;width:162px;height:1.2px;background:#3a3a3a;"></div>
<div class="a" style="left:195px;top:411.8px;width:162px;height:1.2px;background:#3a3a3a;"></div>
<div class="a" style="left:195px;top:586px;width:162px;height:24px;background:#252525;"></div>
<svg style="left:200.2px;top:331.09999999999997px;" width="15" height="15" viewBox="0 0 15 15"><path d="M2.3,3.3 A5.7,5.7 0 1 1 1.4,7" stroke="#b4b4b4" stroke-width="1" fill="none"/><path d="M0.5,1.3 L1.9,4 L4.8,3.6" stroke="#b4b4b4" stroke-width="1" fill="none"/><path d="M6.1,1.5 V5.4 H10.9" stroke="#17b5ad" stroke-width="1.3" fill="none"/></svg>
<div class="t" style="left:218.6px;top:333.60px;font-size:10.4px;color:#ececec;font-weight:400;">Recent</div>
<svg style="left:200.2px;top:355.3px;" width="15" height="15" viewBox="0 0 15 15"><path d="M6.5,0.3 L8.3,4.6 L12.8,4.9 L9.3,7.8 L10.5,12.3 L6.5,9.8 L2.5,12.3 L3.7,7.8 L0.2,4.9 L4.7,4.6 Z" stroke="#b4b4b4" stroke-width="1" fill="none"/></svg>
<div class="t" style="left:218.6px;top:357.80px;font-size:10.4px;color:#ececec;font-weight:400;">Favorites</div>
<svg style="left:200.2px;top:388.7px;" width="15" height="15" viewBox="0 0 15 15"><text x="0.3" y="10.5" font-family="Liberation Serif" font-style="italic" font-size="13" fill="#9a9a9a">fx</text><path d="M10.8,9 L13.5,12 M13.8,9.3 V12.3 H10.8" stroke="#17b5ad" stroke-width="1.1" fill="none"/></svg>
<div class="t" style="left:218.6px;top:391.20px;font-size:10.4px;color:#ececec;font-weight:400;">All</div>
<svg style="left:200.2px;top:422.9px;" width="15" height="15" viewBox="0 0 15 15"><path d="M7.5,0.5 L1,7.2 L7.5,12.5 Z" stroke="#b4b4b4" stroke-width="1" fill="none"/><path d="M7.5,0.5 L13.8,9.3 L7.5,12.5 Z M9.3,3.3 V10.5" stroke="#17b5ad" stroke-width="1.1" fill="none"/></svg>
<div class="t" style="left:218.6px;top:425.40px;font-size:10.4px;color:#ececec;font-weight:400;">Pyramid Functions</div>
<svg style="left:200.2px;top:447.0px;" width="15" height="15" viewBox="0 0 15 15"><ellipse cx="6.5" cy="2.3" rx="6" ry="1.8" stroke="#17b5ad" stroke-width="1.2" fill="none"/><path d="M0.5,2.3 V11.5 Q6.5,14.5 12.5,11.5 V2.3 M0.5,5.6 Q6.5,8.5 12.5,5.6 M0.5,8.6 Q6.5,11.5 12.5,8.6" stroke="#b4b4b4" stroke-width="1" fill="none"/></svg>
<div class="t" style="left:218.6px;top:449.50px;font-size:10.4px;color:#ececec;font-weight:400;">Database Functions</div>
<svg style="left:200.2px;top:471.0px;" width="15" height="15" viewBox="0 0 15 15"><circle cx="6.8" cy="6.8" r="6.3" stroke="#b4b4b4" stroke-width="1" fill="none"/><path d="M5.9,3.4 V7.2 H8.8" stroke="#17b5ad" stroke-width="1.3" fill="none"/></svg>
<div class="t" style="left:218.6px;top:473.50px;font-size:10.4px;color:#ececec;font-weight:400;">Date &amp; Time Functions</div>
<svg style="left:200.2px;top:495.0px;" width="15" height="15" viewBox="0 0 15 15"><circle cx="6.8" cy="6.8" r="6.2" stroke="#b4b4b4" stroke-width="1.3" stroke-dasharray="1.6 0.7" fill="none"/><circle cx="6.8" cy="6.8" r="3.1" stroke="#17b5ad" stroke-width="1.4" fill="none"/></svg>
<div class="t" style="left:218.6px;top:497.50px;font-size:10.4px;color:#ececec;font-weight:400;">Engineering Functions</div>
<svg style="left:200.2px;top:519.0px;" width="15" height="15" viewBox="0 0 15 15"><circle cx="6.8" cy="6.8" r="6.3" stroke="#b4b4b4" stroke-width="1" fill="none"/><text x="6.8" y="10.6" text-anchor="middle" font-family="Liberation Sans" font-size="10" fill="#17b5ad">$</text></svg>
<div class="t" style="left:218.6px;top:521.50px;font-size:10.4px;color:#ececec;font-weight:400;">Financial Functions</div>
<svg style="left:200.2px;top:543.0px;" width="15" height="15" viewBox="0 0 15 15"><circle cx="6.8" cy="6.8" r="6.3" stroke="#b4b4b4" stroke-width="1" fill="none"/><circle cx="6.9" cy="3.5" r="1" fill="#17b5ad"/><path d="M5.6,5.6 H7.6 V10 M5.5,10.2 H8.6" stroke="#17b5ad" stroke-width="1.5" fill="none"/></svg>
<div class="t" style="left:218.6px;top:545.50px;font-size:10.4px;color:#ececec;font-weight:400;">Information Functions</div>
<svg style="left:200.2px;top:567.0px;" width="15" height="15" viewBox="0 0 15 15"><circle cx="6.8" cy="6.8" r="6.3" stroke="#b4b4b4" stroke-width="1" fill="none"/><circle cx="6.8" cy="6.8" r="1.9" fill="#17b5ad"/></svg>
<div class="t" style="left:218.6px;top:569.50px;font-size:10.4px;color:#ececec;font-weight:400;">Logical Functions</div>
<svg style="left:200.2px;top:591.0px;" width="15" height="15" viewBox="0 0 15 15"><circle cx="5.5" cy="5.4" r="4.6" stroke="#b4b4b4" stroke-width="1.1" fill="none"/><path d="M8.8,8.7 L12.6,12.6" stroke="#b4b4b4" stroke-width="1.2"/></svg>
<div class="t" style="left:218.6px;top:593.50px;font-size:10.4px;color:#ececec;font-weight:400;">Lookup Functions</div>
<div class="a" style="left:373px;top:323.7px;width:165px;height:28.3px;background:#454545;"></div>
<div class="t" style="left:391px;top:334.64px;font-size:10px;color:#f2f2f2;font-weight:700;">Functi...</div>
<div class="a" style="left:439.2px;top:326px;width:106px;height:22.2px;background:#f7f7f7;"></div>
<div class="a" style="left:439.2px;top:326px;width:106px;height:22.2px;overflow:hidden"><div class="t" style="left:6.4px;top:6.2px;font-size:10.8px;color:#7a7a7a">Search (Use * for co</div></div>
<div class="a" style="left:373px;top:352px;width:165px;height:1.3px;background:#2f2f2f;"></div>
<div class="a" style="left:373px;top:353.3px;width:159px;height:257.5px;background:#555555;"></div>
<div class="a" style="left:532px;top:353.3px;width:6px;height:257.5px;background:#4c4c4c;"></div>
<div class="a" style="left:532.5px;top:450px;width:5px;height:78px;background:#606060;"></div>
<div class="a" style="left:373px;top:353.3px;width:159px;height:257.5px;overflow:hidden" id="fl"></div>
<div class="a" style="left:373px;top:356.6px;width:159px;height:12px;overflow:hidden"><div class="t" style="left:9px;top:-3.02px;font-size:10.3px;color:#ececec;letter-spacing:-0.38px">HSTACK</div><svg style="left:147px;top:-4.20px" width="12" height="12"><path d="M5.3,0.5 L6.7,3.9 L10.3,4.1 L7.5,6.4 L8.5,10 L5.3,8 L2.1,10 L3.1,6.4 L0.3,4.1 L3.9,3.9 Z" stroke="#8a8a8a" stroke-width="1" fill="none"/></svg></div>
<div class="t" style="left:382px;top:377.58px;font-size:10.3px;color:#ececec;font-weight:400;letter-spacing:-0.38px">HYPERLINK</div>
<svg style="left:520px;top:376.40000000000003px;" width="12" height="12" viewBox="0 0 12 12"><path d="M5.3,0.5 L6.7,3.9 L10.3,4.1 L7.5,6.4 L8.5,10 L5.3,8 L2.1,10 L3.1,6.4 L0.3,4.1 L3.9,3.9 Z" stroke="#8a8a8a" stroke-width="1" fill="none"/></svg>
<div class="t" style="left:382px;top:401.58px;font-size:10.3px;color:#ececec;font-weight:400;letter-spacing:-0.38px">INDEX</div>
<svg style="left:520px;top:400.40000000000003px;" width="12" height="12" viewBox="0 0 12 12"><path d="M5.3,0.5 L6.7,3.9 L10.3,4.1 L7.5,6.4 L8.5,10 L5.3,8 L2.1,10 L3.1,6.4 L0.3,4.1 L3.9,3.9 Z" stroke="#8a8a8a" stroke-width="1" fill="none"/></svg>
<div class="t" style="left:382px;top:425.58px;font-size:10.3px;color:#ececec;font-weight:400;letter-spacing:-0.38px">INDIRECT</div>
<svg style="left:520px;top:424.40000000000003px;" width="12" height="12" viewBox="0 0 12 12"><path d="M5.3,0.5 L6.7,3.9 L10.3,4.1 L7.5,6.4 L8.5,10 L5.3,8 L2.1,10 L3.1,6.4 L0.3,4.1 L3.9,3.9 Z" stroke="#8a8a8a" stroke-width="1" fill="none"/></svg>
<div class="a" style="left:378px;top:442px;width:154px;height:22.5px;background:#262626;"></div>
<div class="t" style="left:382px;top:449.58px;font-size:10.3px;color:#ececec;font-weight:400;letter-spacing:-0.38px">LOOKUP</div>
<svg style="left:520px;top:448.40000000000003px;" width="12" height="12" viewBox="0 0 12 12"><path d="M5.3,0.5 L6.7,3.9 L10.3,4.1 L7.5,6.4 L8.5,10 L5.3,8 L2.1,10 L3.1,6.4 L0.3,4.1 L3.9,3.9 Z" stroke="#8a8a8a" stroke-width="1" fill="none"/></svg>
<div class="t" style="left:382px;top:473.58px;font-size:10.3px;color:#ececec;font-weight:400;letter-spacing:-0.38px">MATCH</div>
<div class="t" style="left:419.5px;top:473.84px;font-size:10px;color:#17b5ad;font-weight:700;">*</div>
<svg style="left:520px;top:472.40000000000003px;" width="12" height="12" viewBox="0 0 12 12"><path d="M5.3,0.5 L6.7,3.9 L10.3,4.1 L7.5,6.4 L8.5,10 L5.3,8 L2.1,10 L3.1,6.4 L0.3,4.1 L3.9,3.9 Z" stroke="#8a8a8a" stroke-width="1" fill="none"/></svg>
<div class="t" style="left:382px;top:497.58px;font-size:10.3px;color:#ececec;font-weight:400;letter-spacing:-0.38px">OFFSET</div>
<svg style="left:520px;top:496.40000000000003px;" width="12" height="12" viewBox="0 0 12 12"><path d="M5.3,0.5 L6.7,3.9 L10.3,4.1 L7.5,6.4 L8.5,10 L5.3,8 L2.1,10 L3.1,6.4 L0.3,4.1 L3.9,3.9 Z" stroke="#8a8a8a" stroke-width="1" fill="none"/></svg>
<div class="t" style="left:382px;top:521.58px;font-size:10.3px;color:#ececec;font-weight:400;letter-spacing:-0.38px">ROW</div>
<svg style="left:520px;top:520.4px;" width="12" height="12" viewBox="0 0 12 12"><path d="M5.3,0.5 L6.7,3.9 L10.3,4.1 L7.5,6.4 L8.5,10 L5.3,8 L2.1,10 L3.1,6.4 L0.3,4.1 L3.9,3.9 Z" stroke="#8a8a8a" stroke-width="1" fill="none"/></svg>
<div class="t" style="left:382px;top:545.58px;font-size:10.3px;color:#ececec;font-weight:400;letter-spacing:-0.38px">ROWS</div>
<svg style="left:520px;top:544.4px;" width="12" height="12" viewBox="0 0 12 12"><path d="M5.3,0.5 L6.7,3.9 L10.3,4.1 L7.5,6.4 L8.5,10 L5.3,8 L2.1,10 L3.1,6.4 L0.3,4.1 L3.9,3.9 Z" stroke="#8a8a8a" stroke-width="1" fill="none"/></svg>
<div class="t" style="left:382px;top:569.58px;font-size:10.3px;color:#ececec;font-weight:400;letter-spacing:-0.38px">SORT</div>
<svg style="left:520px;top:568.4px;" width="12" height="12" viewBox="0 0 12 12"><path d="M5.3,0.5 L6.7,3.9 L10.3,4.1 L7.5,6.4 L8.5,10 L5.3,8 L2.1,10 L3.1,6.4 L0.3,4.1 L3.9,3.9 Z" stroke="#8a8a8a" stroke-width="1" fill="none"/></svg>
<div class="t" style="left:382px;top:593.58px;font-size:10.3px;color:#ececec;font-weight:400;letter-spacing:-0.38px">SORTBY</div>
<svg style="left:520px;top:592.4px;" width="12" height="12" viewBox="0 0 12 12"><path d="M5.3,0.5 L6.7,3.9 L10.3,4.1 L7.5,6.4 L8.5,10 L5.3,8 L2.1,10 L3.1,6.4 L0.3,4.1 L3.9,3.9 Z" stroke="#8a8a8a" stroke-width="1" fill="none"/></svg>
<div class="a" style="left:545.2px;top:323.7px;width:6.8px;height:288px;background:#303030;"></div>
<div class="a" style="left:552px;top:323.7px;width:590px;height:28.3px;background:#474747;"></div>
<div class="t" style="left:569.8px;top:334.50px;font-size:10.4px;color:#f2f2f2;font-weight:700;letter-spacing:-0.45px">LOOKUP</div>
<div class="t" style="left:617px;top:334.07px;font-size:10.9px;color:#a0a0a0;font-weight:400;">(Lookup Functions)</div>
<div class="a" style="left:552px;top:352px;width:590px;height:1.3px;background:#2a2a2a;"></div>
<div class="a" style="left:552px;top:353.3px;width:165.2px;height:257.5px;background:#4f4f4f;"></div>
<div class="a" style="left:717.2px;top:353.3px;width:1.6px;height:257.5px;background:#2e2e2e;"></div>
<div class="a" style="left:718.8px;top:353.3px;width:423.2px;height:257.5px;background:#555555;"></div>
<div class="t" style="left:563.6px;top:366.01px;font-size:10.5px;color:#ececec;font-weight:400;">This function searches for a</div>
<div class="t" style="left:563.6px;top:387.51px;font-size:10.5px;color:#ececec;font-weight:400;">value and returns a value from</div>
<div class="t" style="left:563.6px;top:409.01px;font-size:10.5px;color:#ececec;font-weight:400;">the same location in a second</div>
<div class="t" style="left:563.6px;top:430.51px;font-size:10.5px;color:#ececec;font-weight:400;">area</div>
<div class="t" style="left:730px;top:367.66px;font-size:10.8px;color:#ececec;font-weight:400;">lookup value</div>
<div class="a" style="left:833.5px;top:362.5px;width:221px;height:22px;background:#f5f5f5;"></div>
<div class="t" style="left:833.5px;top:396.83px;font-size:10.6px;color:#9e9e9e;font-weight:400;">Value for which to search; can be number, text,</div>
<div class="t" style="left:833.5px;top:411.73px;font-size:10.6px;color:#9e9e9e;font-weight:400;">logical value, or name or reference that refers to a</div>
<div class="t" style="left:833.5px;top:426.63px;font-size:10.6px;color:#9e9e9e;font-weight:400;">value</div>
<div class="t" style="left:730px;top:453.96px;font-size:10.8px;color:#ececec;font-weight:400;">lookup vector</div>
<div class="a" style="left:833.5px;top:449px;width:221px;height:22px;background:#f5f5f5;"></div>
<div class="t" style="left:833.5px;top:483.83px;font-size:10.6px;color:#9e9e9e;font-weight:400;">Cell range that contains one row or one column;</div>
<div class="t" style="left:833.5px;top:498.73px;font-size:10.6px;color:#9e9e9e;font-weight:400;">can be text, numbers, or a logical value; values</div>
<div class="t" style="left:833.5px;top:513.63px;font-size:10.6px;color:#9e9e9e;font-weight:400;">need to be in ascending order</div>
<div class="t" style="left:730px;top:539.96px;font-size:10.8px;color:#ececec;font-weight:400;">result vector</div>
<div class="a" style="left:833.5px;top:535.6px;width:221px;height:22px;background:#f5f5f5;"></div>
<div class="t" style="left:833.5px;top:569.93px;font-size:10.6px;color:#9e9e9e;font-weight:400;">Cell range that contains one row or column; must</div>
<div class="t" style="left:833.5px;top:584.83px;font-size:10.6px;color:#9e9e9e;font-weight:400;">be the same size as lookup vector</div>
<div class="a" style="left:552px;top:610.8px;width:590px;height:5.2px;background:#2e2e2e;"></div>
<div class="a" style="left:753px;top:290px;width:44px;height:1px;background:#bdbdbd;"></div>
<div class="a" style="left:753px;top:292.3px;width:44px;height:1px;background:#bdbdbd;"></div>
<div class="a" style="left:184px;top:291.7px;width:360.2px;height:326px;border:6.2px solid #4a5cf5"></div>
<div class="a" style="left:552px;top:295px;width:566.3px;height:312px;border:6.2px solid #12f58a"></div>
<div class="a" style="left:165px;top:0px;width:67px;height:74.5px;border:6.2px solid #f54444"></div>
<svg style="left:244px;top:20px;" width="324" height="34" viewBox="0 0 324 34"><defs><filter id="sh" x="-10%" y="-50%" width="120%" height="200%"><feDropShadow dx="1" dy="2" stdDeviation="1.5" flood-color="#000" flood-opacity="0.45"/></filter></defs><path filter="url(#sh)" fill="#f54444" d="M1.5,16.8 L31,2 L31,11.6 L315,10 Q320,10 320,15 Q320,20.6 315,20.6 L31,21.5 L31,31.4 Z"/></svg>
</body></html>
